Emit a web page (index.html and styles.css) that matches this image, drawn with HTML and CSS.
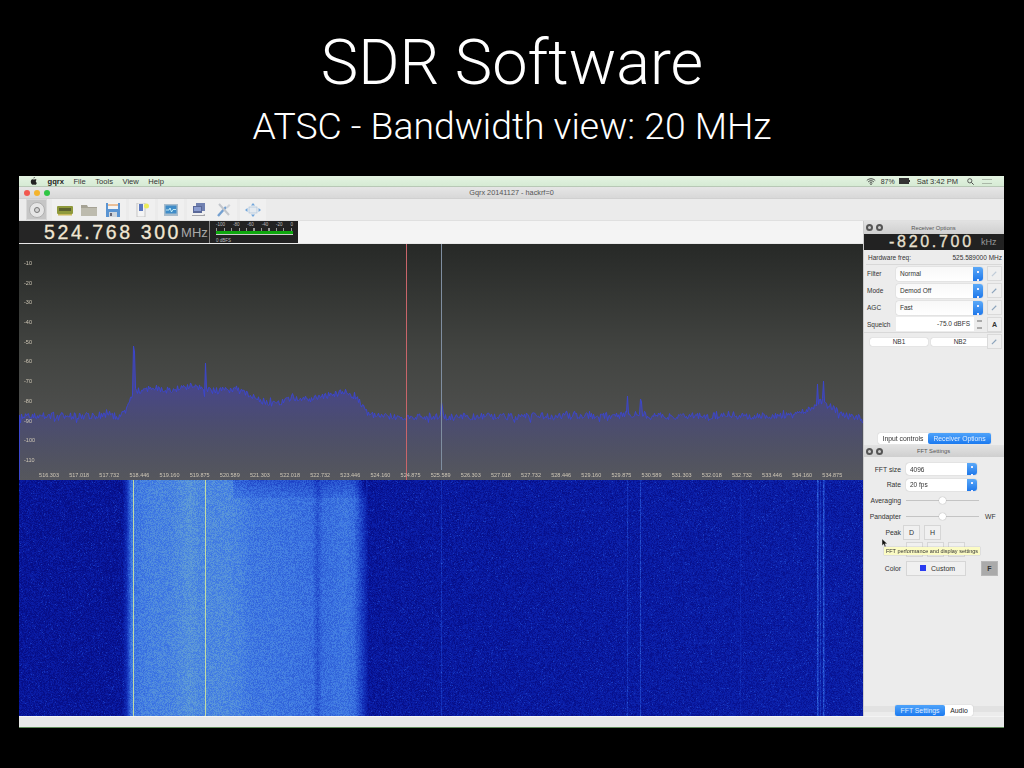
FILE: index.html
```html
<!DOCTYPE html>
<html lang="en">
<head>
    <meta charset="UTF-8">
    <title>SDR Software</title>
    <link rel="stylesheet" href="styles.css">
</head>
<body>
    <h1>SDR Software</h1>
    <h2>ATSC - Bandwidth view: 20 MHz</h2>

    <div class="app">
        <div class="menubar">
            <svg class="apple" viewBox="0 0 16 18" width="7" height="8"><path d="M11 0c.2 1.700-1.300 3.400-3 3.300C7.800 1.700 9.400.1 11 0zM13.300 9.500c0-2 1.600-2.900 1.700-3-1-1.400-2.400-1.600-3-1.600-1.300-.1-2.500.8-3.100.8-.7 0-1.700-.8-2.800-.8C4.600 5 3.200 5.800 2.500 7.100 1 9.700 2.100 13.600 3.600 15.700c.7 1 1.600 2.200 2.700 2.100 1.100 0 1.500-.7 2.800-.7s1.700.7 2.800.7c1.200 0 1.900-1 2.600-2.100.8-1.200 1.200-2.300 1.200-2.400-.1 0-2.400-.9-2.400-3.800z"/></svg>
            <span class="menu-app">gqrx</span>
            <span>File</span>
            <span>Tools</span>
            <span>View</span>
            <span>Help</span>
            <div class="status">
                <svg viewBox="0 0 14 10" width="10" height="7"><path d="M1 3.500c3.400-3.200 8.600-3.200 12 0M3 5.500c2.300-2.100 5.700-2.100 8 0M5 7.400c1.200-1 2.800-1 4 0" fill="none" stroke="#333" stroke-width="1.300"/><circle cx="7" cy="9" r="1" fill="#333"/></svg>
                <span class="status-pct">87%</span>
                <span class="battery"></span>
                <span class="status-time">Sat 3:42 PM</span>
                <svg viewBox="0 0 10 10" width="7" height="7"><circle cx="4" cy="4" r="3" fill="none" stroke="#444" stroke-width="1.200"/><path d="M6.300 6.300L9.500 9.500" stroke="#444" stroke-width="1.400"/></svg>
                <span class="list-icon"></span>
            </div>
        </div>

        <div class="titlebar">
            <span class="light red"></span>
            <span class="light yellow"></span>
            <span class="light green"></span>
            <span class="title-text">Gqrx 20141127 - hackrf=0</span>
        </div>

        <div class="toolbar">
            <div class="disc-btn">
                <svg viewBox="0 0 16 16" width="16" height="16"><circle cx="8" cy="8" r="7.500" fill="#e6e6e6" stroke="#b0b0b0"/><circle cx="8" cy="8" r="2.500" fill="#d4d4d4" stroke="#777"/></svg>
            </div>
            <div class="tb-group">
                <svg viewBox="0 0 16 14" width="16" height="14"><rect x="0" y="3" width="16" height="8" rx="1" fill="#8f9a3c"/><rect x="2" y="5" width="12" height="3" fill="#5c6230"/><path d="M1 11h14v1.500H1z" fill="#c8b85a"/></svg>
                <svg viewBox="0 0 16 14" width="16" height="14"><path d="M0 2h6l1 2h9v9H0z" fill="#a5a294"/><rect x="0" y="5" width="16" height="8" fill="#bdbbae"/></svg>
                <svg viewBox="0 0 16 14" width="16" height="14"><rect x="1" y="0" width="14" height="14" fill="#5a94d2"/><rect x="3" y="0" width="10" height="6" fill="#f3f3f3"/><path d="M3 2h10" stroke="#e08a3c"/><rect x="4" y="9" width="8" height="5" fill="#cfd6dd"/><rect x="5" y="10" width="2" height="3" fill="#667"/></svg>
            </div>
            <div class="tb-group">
                <svg viewBox="0 0 16 14" width="16" height="14"><rect x="3" y="0" width="8" height="14" fill="#f4f4f4" stroke="#aaa" stroke-width=".6"/><rect x="5" y="1" width="4" height="7" fill="#5a78c0"/><circle cx="12.500" cy="3" r="2.500" fill="#ecec5a"/></svg>
            </div>
            <div class="tb-group">
                <svg viewBox="0 0 16 14" width="16" height="14"><rect x="1" y="1" width="14" height="12" fill="#a8bccc"/><rect x="2.500" y="2.500" width="11" height="8" fill="#3f8cc8"/><path d="M3 7h3l1-2 1.500 4L10 6.500h3" fill="none" stroke="#dff" stroke-width=".8"/></svg>
            </div>
            <div class="tb-group">
                <svg viewBox="0 0 16 14" width="16" height="14"><rect x="4" y="0" width="9" height="8" fill="#7080b0"/><rect x="1" y="3" width="9" height="7" fill="#5a6898"/><rect x="2" y="4" width="7" height="4" fill="#8a9cd0"/><path d="M0 12h11l2-1v2H0z" fill="#a4a4aa"/></svg>
                <svg viewBox="0 0 16 14" width="16" height="14"><path d="M2 13L10 4" stroke="#74a0d0" stroke-width="2.400"/><path d="M3 1l10 11" stroke="#c2c6cc" stroke-width="2"/><path d="M10 4l3-3 1.500 1.500-3 3" fill="#d0d4da"/></svg>
            </div>
            <div class="tb-group">
                <svg viewBox="0 0 16 14" width="16" height="14"><rect x="4" y="4" width="8" height="6" fill="#e4eaf0" stroke="#a0bcd8" stroke-width=".6"/><path d="M8 0l2 2.500H6zM8 14l2-2.500H6zM0 7l2.500-2v4zM16 7l-2.500-2v4z" fill="#70a6dc"/></svg>
            </div>
        </div>

        <div class="main">
            <div class="left">
                <div class="freqbar">
                    <div class="freq-lcd">
                        <span class="freq-digits">524.768 300</span>
                        <span class="freq-unit">MHz</span>
                    </div>
                    <div class="meter">
                        <div class="meter-scale">
                            <span>-100</span><span>-80</span><span>-60</span><span>-40</span><span>-20</span><span>0</span>
                        </div>
                        <div class="meter-ticks"></div>
                        <div class="meter-bar"></div>
                        <div class="meter-value">0 dBFS</div>
                    </div>
                </div>

                <div class="plot">
                    <canvas id="spectrum" width="844" height="236"></canvas>
                    <div class="db-labels">
                        <span>-10</span><span>-20</span><span>-30</span><span>-40</span><span>-50</span><span>-60</span>
                        <span>-70</span><span>-80</span><span>-90</span><span>-100</span><span>-110</span>
                    </div>
                    <div class="freq-labels">
                        <span>516.303</span><span>517.018</span><span>517.732</span><span>518.446</span><span>519.160</span>
                        <span>519.875</span><span>520.589</span><span>521.303</span><span>522.018</span><span>522.732</span>
                        <span>523.446</span><span>524.160</span><span>524.875</span><span>525.589</span><span>526.303</span>
                        <span>527.018</span><span>527.732</span><span>528.446</span><span>529.160</span><span>529.875</span>
                        <span>530.589</span><span>531.303</span><span>532.018</span><span>532.732</span><span>533.446</span>
                        <span>534.160</span><span>534.875</span>
                    </div>
                </div>

                <canvas id="waterfall" class="waterfall" width="844" height="236"></canvas>
            </div>

            <div class="docks">
                <div class="dock receiver">
                    <div class="dock-head">
                        <span class="dock-btn"></span><span class="dock-btn"></span>
                        <span class="dock-title">Receiver Options</span>
                    </div>
                    <div class="offset-lcd">
                        <span class="offset-digits">-820.700</span>
                        <span class="offset-unit">kHz</span>
                    </div>
                    <div class="hw-row">
                        <span>Hardware freq:</span>
                        <span>525.589000 MHz</span>
                    </div>
                    <div class="rx-row">
                        <span class="rx-label">Filter</span>
                        <div class="select wide"><span>Normal</span><i class="stepper"></i></div>
                        <span class="mini-btn faded"><svg viewBox="0 0 8 8" width="7" height="7"><path d="M1 7l5-5" stroke="#c0ccd8" stroke-width="1.300"/></svg></span>
                    </div>
                    <div class="rx-row">
                        <span class="rx-label">Mode</span>
                        <div class="select wide"><span>Demod Off</span><i class="stepper"></i></div>
                        <span class="mini-btn"><svg viewBox="0 0 8 8" width="7" height="7"><path d="M1 7l5-5" stroke="#8ca4bc" stroke-width="1.300"/></svg></span>
                    </div>
                    <div class="rx-row">
                        <span class="rx-label">AGC</span>
                        <div class="select wide"><span>Fast</span><i class="stepper"></i></div>
                        <span class="mini-btn"><svg viewBox="0 0 8 8" width="7" height="7"><path d="M1 7l5-5" stroke="#8ca4bc" stroke-width="1.300"/></svg></span>
                    </div>
                    <div class="rx-row squelch">
                        <span class="rx-label">Squelch</span>
                        <div class="spin">-75.0 dBFS</div>
                        <span class="spin-arrows"></span>
                        <span class="mini-btn bold">A</span>
                    </div>
                    <div class="nb-row">
                        <span class="nb">NB1</span>
                        <span class="nb">NB2</span>
                        <span class="mini-btn"><svg viewBox="0 0 8 8" width="7" height="7"><path d="M1 7l5-5" stroke="#8ca4bc" stroke-width="1.300"/></svg></span>
                    </div>
                    <div class="tabs dock-tabs">
                        <span class="tab">Input controls</span>
                        <span class="tab on">Receiver Options</span>
                    </div>
                </div>

                <div class="dock fft">
                    <div class="dock-head">
                        <span class="dock-btn"></span><span class="dock-btn"></span>
                        <span class="dock-title">FFT Settings</span>
                    </div>
                    <div class="fft-row first">
                        <span class="fft-label">FFT size</span>
                        <div class="select"><span>4096</span><i class="stepper"></i></div>
                    </div>
                    <div class="fft-row short">
                        <span class="fft-label">Rate</span>
                        <div class="select"><span>20 fps</span><i class="stepper"></i></div>
                    </div>
                    <div class="fft-row">
                        <span class="fft-label">Averaging</span>
                        <div class="slider"><i></i></div>
                    </div>
                    <div class="fft-row">
                        <span class="fft-label">Pandapter</span>
                        <div class="slider"><i></i></div>
                        <span class="wf">WF</span>
                    </div>
                    <div class="fft-row tall peak">
                        <span class="fft-label">Peak</span>
                        <span class="sq-btn">D</span>
                        <span class="sq-btn">H</span>
                    </div>
                    <div class="fft-row tall">
                        <span class="fft-label">Ref</span>
                        <span class="sq-btn">B</span>
                        <span class="sq-btn">C</span>
                        <span class="sq-btn">S</span>
                    </div>
                    <div class="fft-row color">
                        <span class="fft-label">Color</span>
                        <div class="color-btn"><i></i>Custom</div>
                        <span class="f-btn">F</span>
                    </div>
                    <div class="tabs bottom-tabs">
                        <span class="tab on">FFT Settings</span>
                        <span class="tab">Audio</span>
                    </div>
                </div>
            </div>
        </div>

        <div class="statusbar"></div>

        <svg class="cursor" viewBox="0 0 8 11" width="6" height="8"><path d="M0 0v9l2.200-2 1.500 3.500 1.500-.7L3.800 6.500H7z" fill="#111" stroke="#eee" stroke-width=".4"/></svg>
        <div class="tooltip">FFT performance and display settings</div>
    </div>

    <script src="script.js"></script>
</body>
</html>
```

FILE: styles.css
```css
* {
    margin: 0;
    padding: 0;
    box-sizing: border-box;
}

body {
    background: #000;
    color: #fff;
    width: 1024px;
    height: 768px;
    overflow: hidden;
    font-family: 'Liberation Sans', Arial, sans-serif;
}

h1 {
    padding-top: 27px;
    height: 98px;
    text-align: center;
    font-family: Roboto, 'Liberation Sans', sans-serif;
    font-size: 63px;
    line-height: 72px;
    font-weight: 300;
}

h2 {
    height: 52px;
    text-align: center;
    font-family: Roboto, 'Liberation Sans', sans-serif;
    font-size: 37.3px;
    line-height: 56px;
    font-weight: 300;
}

.app {
    position: relative;
    margin: 26px 0 0 19px;
    width: 985px;
    height: 552px;
    background: #ececec;
    color: #333;
    font-size: 7px;
    overflow: hidden;
    filter: blur(0.4px);
}

/* Mac menu bar */
.menubar {
    height: 11px;
    display: flex;
    align-items: center;
    gap: 9.5px;
    padding-left: 11px;
    background: linear-gradient(#e4f3e2, #d6ebd4);
    border-bottom: 1px solid #b8c8b6;
    font-size: 7.6px;
}

.apple {
    margin-right: 1px;
    fill: #222;
}

.menu-app {
    font-weight: 700;
    color: #222;
}

.status {
    margin-left: auto;
    display: flex;
    align-items: center;
    gap: 4px;
    padding-right: 12px;
    font-size: 7px;
}

.status-pct {
    margin-left: 1px;
}

.battery {
    position: relative;
    width: 10px;
    height: 6px;
    background: #333;
    border: 1px solid #333;
    margin-right: 4px;
}

.battery::after {
    content: "";
    position: absolute;
    left: 9px;
    top: 1px;
    width: 1px;
    height: 2px;
    background: #333;
}

.status-time {
    font-size: 7.5px;
    margin-right: 5px;
}

.list-icon {
    width: 10px;
    height: 5px;
    margin-left: 4px;
    border-top: 1px solid #aab8a8;
    border-bottom: 1px solid #aab8a8;
}

.titlebar {
    position: relative;
    height: 11px;
    display: flex;
    align-items: center;
    gap: 4px;
    padding-left: 5px;
    background: linear-gradient(#e6e6e6, #d8d8d8);
}

.light {
    width: 6px;
    height: 6px;
    border-radius: 50%;
}

.red { background: #f2584f; }
.yellow { background: #f4b42c; }
.green { background: #2fc644; }

.title-text {
    position: absolute;
    left: 0;
    right: 0;
    text-align: center;
    color: #555;
    font-size: 7.3px;
}

.toolbar {
    height: 23px;
    display: flex;
    align-items: center;
    gap: 3px;
    padding-left: 7px;
    background: #ebebeb;
    border-top: 1px solid #d0d0d0;
    border-bottom: 1px solid #e0e0e0;
}

.disc-btn {
    width: 21px;
    height: 21px;
    margin-right: 2px;
    display: flex;
    align-items: center;
    justify-content: center;
    background: #c6c6c6;
    border: 1px solid #d8d8d8;
}

.tb-group {
    height: 21px;
    display: flex;
    align-items: center;
    gap: 8px;
    padding: 0 5px;
    background: #f0f0f0;
}

.main {
    height: 495px;
    display: flex;
}

.left {
    width: 844px;
}

.freqbar {
    height: 23px;
    display: flex;
    background: #f4f4f4;
    border-bottom: 1px solid #e8e8e8;
}

.freq-lcd {
    width: 190px;
    display: flex;
    align-items: center;
    padding-left: 25px;
    background: #252525;
}

.freq-digits {
    font-size: 19.5px;
    letter-spacing: 2.6px;
    color: #f0e6d2;
    white-space: nowrap;
    -webkit-text-stroke: 0.3px #f0e6d2;
}

.freq-unit {
    font-size: 13px;
    color: #a8a8a8;
}

.meter {
    width: 89px;
    padding: 1px 5px 0 6px;
    background: #222;
    border-left: 1px solid #888;
    color: #bbb;
}

.meter-scale {
    display: flex;
    justify-content: space-between;
    font-size: 4.5px;
    line-height: 6px;
}

.meter-ticks {
    height: 3px;
    background: repeating-linear-gradient(90deg, #999 0 1px, transparent 1px 7.5px);
}

.meter-bar {
    height: 4px;
    margin-top: 0;
    background: #0fa80f;
    border-bottom: 1px solid #ccc;
}

.meter-value {
    margin-top: 3px;
    font-size: 4.5px;
    line-height: 6px;
}

.plot {
    position: relative;
    height: 236px;
    color: #cfc7b6;
    font-size: 5.5px;
}

#spectrum,
.waterfall {
    display: block;
}

.db-labels {
    position: absolute;
    left: 5px;
    top: 16px;
    display: flex;
    flex-direction: column;
    gap: 13.7px;
    line-height: 6px;
}

.freq-labels {
    position: absolute;
    left: 15px;
    top: 228px;
    display: flex;
    line-height: 6px;
}

.freq-labels span {
    width: 30.14px;
    text-align: center;
}

/* Right hand docks */
.docks {
    width: 141px;
    display: flex;
    flex-direction: column;
    border-left: 1px solid #ccc;
}

.dock {
    display: flex;
    flex-direction: column;
}

.receiver {
    height: 224px;
}

.fft {
    position: relative;
    height: 271px;
}

/* faint band the bottom tabs sit on */
.fft::after {
    content: "";
    position: absolute;
    left: 0;
    right: 0;
    bottom: 4px;
    height: 6px;
    background: #e2e2e2;
}

.dock-head {
    position: relative;
    height: 13px;
    flex-shrink: 0;
    display: flex;
    align-items: center;
    gap: 3px;
    padding-left: 2px;
    background: linear-gradient(#e2e2e2, #cfcfcf);
}

.fft .dock-head {
    height: 12px;
}

.dock-btn {
    width: 7px;
    height: 7px;
    border-radius: 50%;
    background: #ccc;
    border: 2px solid #555;
}

.dock-title {
    position: absolute;
    left: 0;
    right: 0;
    text-align: center;
    font-size: 5.8px;
    color: #555;
    padding-right: 1px;
}

.offset-lcd {
    height: 16px;
    flex-shrink: 0;
    display: flex;
    align-items: center;
    padding-left: 25px;
    background: #222;
}

.offset-digits {
    width: 92px;
    font-size: 16px;
    letter-spacing: 2.7px;
    color: #e8e0d0;
    white-space: nowrap;
    -webkit-text-stroke: 0.3px #e8e0d0;
}

.offset-unit {
    font-size: 9px;
    color: #999;
}

.hw-row {
    height: 14px;
    margin: 1px 2px 0;
    padding: 0 0 0 2px;
    display: flex;
    justify-content: space-between;
    align-items: center;
    border-bottom: 1px solid #d8d8d8;
    font-size: 6.5px;
    flex-shrink: 0;
}

.rx-row {
    height: 17px;
    flex-shrink: 0;
    display: flex;
    align-items: center;
    padding-left: 3px;
}

.rx-label {
    width: 29px;
    font-size: 6.5px;
}

.select {
    position: relative;
    width: 71px;
    height: 12px;
    display: flex;
    align-items: center;
    padding-left: 4px;
    background: #fff;
    border-radius: 3px;
    font-size: 6.5px;
    box-shadow: 0 0 1px #999;
}

.select.wide {
    width: 87px;
    height: 14px;
    background: linear-gradient(#f8f8f8, #fff);
}

.stepper {
    position: absolute;
    right: 0;
    top: 0;
    bottom: 0;
    width: 10px;
    border-radius: 0 3px 3px 0;
    background: linear-gradient(#5ba9f8, #1f78ea);
}

.stepper::after {
    content: "";
    position: absolute;
    left: 4px;
    top: 50%;
    width: 2px;
    height: 6px;
    margin-top: -3px;
    border-top: 2px solid #eef;
    border-bottom: 2px solid #eef;
}

.mini-btn {
    width: 15px;
    height: 15px;
    margin-left: 4px;
    display: flex;
    align-items: center;
    justify-content: center;
    background: #efefef;
    border: 1px solid #dadada;
    font-size: 7px;
    flex-shrink: 0;
}

.mini-btn.bold {
    font-weight: 700;
}

.squelch {
    border-bottom: 1px solid #d8d8d8;
    margin-right: 2px;
}

.spin {
    width: 78px;
    height: 14px;
    line-height: 14px;
    padding-right: 4px;
    text-align: right;
    background: #fff;
    font-size: 6.5px;
}

.spin-arrows {
    width: 5px;
    height: 9px;
    margin-left: 3px;
    border-top: 2px solid #aaa;
    border-bottom: 2px solid #aaa;
}

.squelch .mini-btn {
    margin-left: 5px;
}

.nb-row {
    height: 17px;
    flex-shrink: 0;
    display: flex;
    align-items: center;
    gap: 3px;
    padding-left: 6px;
}

.nb {
    width: 58px;
    height: 8px;
    line-height: 8px;
    text-align: center;
    background: #fff;
    border-radius: 2px;
    font-size: 6.5px;
    box-shadow: 0 0 1px #aaa;
}

.nb-row .mini-btn {
    margin-left: -5px;
}

.tabs {
    position: relative;
    z-index: 1;
    display: flex;
    height: 11px;
    font-size: 6.8px;
    line-height: 11px;
    text-align: center;
    flex-shrink: 0;
    border-radius: 2px;
    background: #fff;
    box-shadow: 0 0 1px #aaa;
}

.tab.on {
    background: linear-gradient(#4fa3fa, #1b7af0);
    color: #e0eeff;
    border-radius: 2px;
}

.dock-tabs {
    margin: auto 0 1px 14px;
    width: 113px;
}

.dock-tabs .tab:first-child {
    width: 50px;
}

.dock-tabs .tab.on {
    width: 63px;
}

.fft-row {
    height: 16px;
    flex-shrink: 0;
    display: flex;
    align-items: center;
}

.fft-row.first {
    margin-top: 4px;
}

.fft-row.short {
    height: 15px;
}

.fft-row.tall {
    height: 17px;
}

.fft-label {
    width: 37px;
    margin-right: 5px;
    text-align: right;
    font-size: 6.8px;
    flex-shrink: 0;
}

.peak .fft-label {
    margin-right: 2px;
}

.slider {
    position: relative;
    width: 73px;
    height: 1px;
    background: #c4c4c4;
}

.slider i {
    position: absolute;
    left: 33px;
    top: -3px;
    width: 7px;
    height: 7px;
    border-radius: 50%;
    background: #fff;
    box-shadow: 0 0 1px #888;
}

.wf {
    margin-left: 6px;
    font-size: 6.8px;
}

.sq-btn {
    width: 17px;
    height: 15px;
    margin-right: 4px;
    display: flex;
    align-items: center;
    justify-content: center;
    background: #f0f0f0;
    border: 1px solid #d6d6d6;
    font-size: 7px;
}

.fft-row.color {
    height: 16px;
    margin-top: 2px;
}

.color-btn {
    width: 60px;
    height: 15px;
    display: flex;
    align-items: center;
    gap: 5px;
    padding-left: 13px;
    background: #f0f0f0;
    border: 1px solid #d6d6d6;
    font-size: 7px;
}

.color-btn i {
    width: 6px;
    height: 6px;
    background: #2a3cf0;
}

.f-btn {
    width: 17px;
    height: 15px;
    margin-left: 15px;
    display: flex;
    align-items: center;
    justify-content: center;
    background: #aaa;
    border: 1px solid #b8b8b8;
    font-size: 7px;
    font-weight: 700;
}

.bottom-tabs {
    margin: auto 0 0 31px;
    width: 78px;
}

.bottom-tabs .tab.on {
    width: 50px;
}

.bottom-tabs .tab:last-child {
    width: 28px;
    color: #222;
}

.statusbar {
    height: 12px;
    background: #e9e9e9;
    border-top: 1px solid #f4f4f4;
    border-bottom: 1px solid #5f8a5a;
}

.cursor {
    position: absolute;
    left: 863px;
    top: 363px;
}

.tooltip {
    position: absolute;
    left: 865px;
    top: 371px;
    width: 96px;
    height: 8px;
    line-height: 8px;
    text-align: center;
    background: #fbfbc4;
    box-shadow: 0 0 1px #999;
    font-size: 5.5px;
    color: #333;
    white-space: nowrap;
}
```

FILE: script.js
```js
// small seeded random so every load looks the same
let seed = 20141127;
function rnd() {
    seed = (seed * 1664525 + 1013904223) >>> 0;
    return seed / 4294967296;
}

function lerpTable(table, x) {
    if (x <= table[0][0]) return table[0][1];
    for (let i = 1; i < table.length; i++) {
        if (x <= table[i][0]) {
            const a = table[i - 1], b = table[i];
            return a[1] + (b[1] - a[1]) * (x - a[0]) / (b[0] - a[0]);
        }
    }
    return table[table.length - 1][1];
}

// x and y below are page pixels of the app window
const X0 = 19, Y0 = 244, W = 844, H = 236;

const traceTable = [
    [19, 416], [120, 416], [126, 409], [130, 399], [135, 391], [150, 388], [170, 390], [190, 386],
    [205, 390], [215, 391], [235, 389], [250, 395], [262, 401], [272, 404], [290, 399], [310, 399],
    [325, 396], [345, 392], [358, 400], [364, 410], [370, 415], [380, 417], [600, 416], [640, 414],
    [655, 416], [790, 416], [808, 411], [820, 402], [830, 407], [845, 416], [863, 418]
];
const spikes = { 133: 346, 134: 352, 205: 363, 441: 402, 442: 408, 627: 396, 640: 399, 641: 402, 817: 384, 823: 381 };

function drawSpectrum() {
    const ctx = document.getElementById('spectrum').getContext('2d');
    const bg = ctx.createLinearGradient(0, 0, 0, H);
    bg.addColorStop(0, '#272927');
    bg.addColorStop(0.45, '#424441');
    bg.addColorStop(1, '#585858');
    ctx.fillStyle = bg;
    ctx.fillRect(0, 0, W, H);

    const pts = [];
    for (let x = X0; x < X0 + W; x++) {
        let y = lerpTable(traceTable, x) + (rnd() - 0.5) * 7;
        if (rnd() > 0.9) y -= 4 * rnd();
        if (rnd() > 0.95) y += 5 * rnd();
        if (spikes[x]) y = spikes[x];
        pts.push([x - X0 + 0.5, y - Y0]);
    }

    const fill = ctx.createLinearGradient(0, 140, 0, H);
    fill.addColorStop(0, 'rgba(72, 68, 180, 0.62)');
    fill.addColorStop(1, 'rgba(70, 80, 130, 0.12)');
    ctx.fillStyle = fill;
    ctx.beginPath();
    ctx.moveTo(0, H);
    pts.forEach(p => ctx.lineTo(p[0], p[1]));
    ctx.lineTo(W, H);
    ctx.closePath();
    ctx.fill();

    ctx.strokeStyle = '#3c46cc';
    ctx.lineWidth = 1;
    ctx.beginPath();
    pts.forEach((p, i) => i ? ctx.lineTo(p[0], p[1]) : ctx.moveTo(p[0], p[1]));
    ctx.stroke();

    ctx.fillStyle = '#3c46cc';
    ctx.fillRect(0, 171, 1, H - 171);

    // demod and center markers
    ctx.fillStyle = '#c8656a';
    ctx.fillRect(406 - X0, 0, 1, H);
    ctx.fillStyle = '#7f8ea0';
    ctx.fillRect(441 - X0, 0, 1, 226);
}

const bandTable = [
    [19, 0.03], [122, 0.03], [126, 0.12], [131, 0.44], [150, 0.49], [170, 0.5], [190, 0.56], [200, 0.52],
    [225, 0.52], [238, 0.5], [250, 0.45], [290, 0.43], [312, 0.41], [317, 0.3], [322, 0.4], [345, 0.44],
    [354, 0.4], [360, 0.24], [368, 0.04], [863, 0.06]
];
const faintLines = { 441: 0.1, 627: 0.1, 640: 0.16, 740: 0.05, 817: 0.2, 818: 0.12, 820: 0.12, 823: 0.22, 824: 0.1 };

function waterColor(t) {
    const stops = [
        [0, 6, 14, 135], [0.06, 10, 28, 165], [0.2, 25, 60, 195], [0.45, 62, 120, 228],
        [0.6, 95, 155, 215], [0.8, 130, 185, 180], [1, 205, 225, 160]
    ];
    for (let i = 1; i < stops.length; i++) {
        if (t <= stops[i][0]) {
            const a = stops[i - 1], b = stops[i], k = (t - a[0]) / (b[0] - a[0]);
            return [a[1] + (b[1] - a[1]) * k, a[2] + (b[2] - a[2]) * k, a[3] + (b[3] - a[3]) * k];
        }
    }
    return stops[stops.length - 1].slice(1);
}

function drawWaterfall() {
    const ctx = document.getElementById('waterfall').getContext('2d');
    const img = ctx.createImageData(W, H);
    for (let row = 0; row < H; row++) {
        for (let col = 0; col < W; col++) {
            const x = col + X0;
            let t = lerpTable(bandTable, x);
            const inBand = x > 128 && x < 364;
            t += (rnd() - 0.5) * (inBand ? 0.16 : 0.09);
            if (!inBand && rnd() > 0.97) t += 0.12;
            // the darker corner where the band came up late
            if (x > 232 && x < 366 && row < 18) t -= 0.14 * (1 - row / 24);
            if (faintLines[x]) t += faintLines[x] * (0.5 + rnd());
            if (x === 133 || x === 205) t = 0.97;
            t = Math.max(0, Math.min(1, t));
            const c = waterColor(t);
            const i = (row * W + col) * 4;
            img.data[i] = c[0];
            img.data[i + 1] = c[1];
            img.data[i + 2] = c[2];
            img.data[i + 3] = 255;
        }
    }
    ctx.putImageData(img, 0, 0);
}

drawSpectrum();
drawWaterfall();
```
